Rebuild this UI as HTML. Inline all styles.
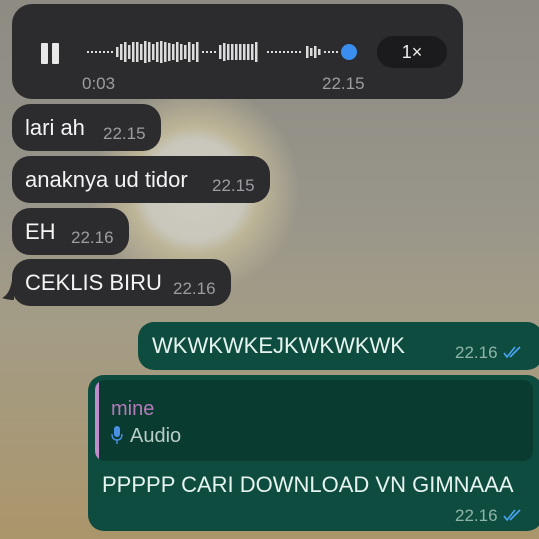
<!DOCTYPE html><html><head><style>
*{margin:0;padding:0;box-sizing:border-box}
body{width:539px;height:539px;overflow:hidden;position:relative;font-family:"Liberation Sans",sans-serif;
background:radial-gradient(circle at 195px 190px,#cfcdc3 0,#c9c7bc 50px,#bdb597 64px,rgba(160,150,120,0) 105px),linear-gradient(180deg,#8d8b82 0%,#97948a 35%,#a39c86 60%,#ab966b 100%)}
.b{position:absolute;background:#2c2b2e;border-radius:18px;color:#fff}
.t{position:absolute;font-size:22px;color:#f4f4f4}
.tm{position:absolute;font-size:17px;color:#9d9ca0}
.g{position:absolute;background:#0f4c40;border-radius:16px}
.gt{position:absolute;font-size:22px;color:#e6f4ef}
.gm{position:absolute;font-size:17px;color:#8fb4a8}
</style></head><body>
<div class="b" style="left:12px;top:4px;width:451px;height:95px;border-radius:20px">
<div style="position:absolute;left:29px;top:39px;width:7px;height:21px;background:#e8e8e8;border-radius:1px"></div>
<div style="position:absolute;left:40px;top:39px;width:7px;height:21px;background:#e8e8e8;border-radius:1px"></div>
<svg style="position:absolute;left:0;top:0" width="451" height="95">
<g fill="#dcdcdc">
<rect x="75" y="47" width="2" height="2"/><rect x="79" y="47" width="2" height="2"/><rect x="83" y="47" width="2" height="2"/><rect x="87" y="47" width="2" height="2"/><rect x="91" y="47" width="2" height="2"/><rect x="95" y="47" width="2" height="2"/><rect x="99" y="47" width="2" height="2"/>
<rect x="104" y="43" width="2.5" height="10"/><rect x="108" y="40" width="2.5" height="16"/><rect x="112" y="38" width="2.5" height="20"/><rect x="116" y="41" width="2.5" height="14"/><rect x="120" y="38" width="2.5" height="20"/><rect x="124" y="38" width="2.5" height="20"/><rect x="128" y="40" width="2.5" height="16"/><rect x="132" y="37" width="2.5" height="22"/><rect x="136" y="38" width="2.5" height="20"/><rect x="140" y="40" width="2.5" height="16"/><rect x="144" y="38" width="2.5" height="20"/><rect x="148" y="37" width="2.5" height="22"/><rect x="152" y="38" width="2.5" height="20"/><rect x="156" y="39" width="2.5" height="18"/><rect x="160" y="40" width="2.5" height="16"/><rect x="164" y="38" width="2.5" height="20"/><rect x="168" y="40" width="2.5" height="16"/><rect x="172" y="41" width="2.5" height="14"/><rect x="176" y="38" width="2.5" height="20"/><rect x="180" y="40" width="2.5" height="16"/><rect x="184" y="38" width="2.5" height="20"/>
<rect x="190" y="47" width="2" height="2"/><rect x="194" y="47" width="2" height="2"/><rect x="198" y="47" width="2" height="2"/><rect x="202" y="47" width="2" height="2"/>
<rect x="207" y="41" width="2.5" height="14"/><rect x="211" y="39" width="2.5" height="18"/><rect x="215" y="40" width="2.5" height="16"/><rect x="219" y="40" width="2.5" height="16"/><rect x="223" y="40" width="2.5" height="16"/><rect x="227" y="40" width="2.5" height="16"/><rect x="231" y="40" width="2.5" height="16"/><rect x="235" y="40" width="2.5" height="16"/><rect x="239" y="40" width="2.5" height="16"/><rect x="243" y="38" width="2.5" height="20"/>
<rect x="255" y="47" width="2" height="2"/><rect x="259" y="47" width="2" height="2"/><rect x="263" y="47" width="2" height="2"/><rect x="267" y="47" width="2" height="2"/><rect x="271" y="47" width="2" height="2"/><rect x="275" y="47" width="2" height="2"/><rect x="279" y="47" width="2" height="2"/><rect x="283" y="47" width="2" height="2"/><rect x="287" y="47" width="2" height="2"/>
<rect x="294" y="42" width="2.5" height="12"/><rect x="298" y="44" width="2.5" height="8"/><rect x="302" y="42" width="2.5" height="12"/><rect x="306" y="45" width="2.5" height="6"/>
<rect x="312" y="47" width="2" height="2"/><rect x="316" y="47" width="2" height="2"/><rect x="320" y="47" width="2" height="2"/><rect x="324" y="47" width="2" height="2"/>
</g>
<circle cx="337" cy="48" r="8" fill="#3a8ef0"/>
</svg>
<div style="position:absolute;left:365px;top:32px;width:70px;height:32px;background:#1b1b1d;border-radius:16px;color:#eee;font-size:18px;text-align:center;line-height:32px">1×</div>
<div class="tm" style="left:70px;top:70px">0:03</div>
<div class="tm" style="left:310px;top:70px">22.15</div>
</div>

<div class="b" style="left:12px;top:104px;width:149px;height:47px"><div class="t" style="left:13px;top:11px">lari ah</div><div class="tm" style="left:91px;top:20px">22.15</div></div>
<div class="b" style="left:12px;top:156px;width:258px;height:47px"><div class="t" style="left:13px;top:11px">anaknya ud tidor</div><div class="tm" style="left:200px;top:20px">22.15</div></div>
<div class="b" style="left:12px;top:208px;width:117px;height:47px"><div class="t" style="left:13px;top:11px">EH</div><div class="tm" style="left:59px;top:20px">22.16</div></div>
<svg style="position:absolute;left:0;top:280px" width="20" height="22"><path d="M14 0 L14 20 Q8 20 2 18 Q10 14 12 0Z" fill="#2c2b2e"/></svg>
<div class="b" style="left:12px;top:259px;width:219px;height:47px"><div class="t" style="left:13px;top:11px">CEKLIS BIRU</div><div class="tm" style="left:161px;top:20px">22.16</div></div>

<div class="g" style="left:138px;top:322px;width:405px;height:48px">
<div class="gt" style="left:14px;top:11px">WKWKWKEJKWKWKWK</div>
<div class="gm" style="left:317px;top:21px">22.16</div>
<svg style="position:absolute;left:365px;top:23px" width="22" height="14"><path d="M1 8 L4 12 L12 2 M7 12 L17 2" stroke="#4aa6f2" stroke-width="1.6" fill="none"/></svg>
</div>

<div class="g" style="left:88px;top:375px;width:455px;height:156px">
<div style="position:absolute;left:7px;top:5px;width:438px;height:81px;background:#0a3b31;border-radius:10px;overflow:hidden">
<div style="position:absolute;left:0;top:0;width:4px;height:81px;background:#c28ccf"></div>
<div style="position:absolute;left:16px;top:18px;font-size:20px;color:#b57ab8">mine</div>
<svg style="position:absolute;left:16px;top:46px" width="12" height="18"><rect x="3" y="0" width="6" height="11" rx="3" fill="#4a90e2"/><path d="M1 8 Q1 14 6 14 Q11 14 11 8 M6 14 V18" stroke="#4a90e2" stroke-width="1.4" fill="none"/></svg>
<div style="position:absolute;left:35px;top:45px;font-size:20px;color:#b9cdc6">Audio</div>
</div>
<div class="gt" style="left:14px;top:97px">PPPPP CARI DOWNLOAD VN GIMNAAA</div>
<div class="gm" style="left:367px;top:131px">22.16</div>
<svg style="position:absolute;left:415px;top:133px" width="22" height="14"><path d="M1 8 L4 12 L12 2 M7 12 L17 2" stroke="#4aa6f2" stroke-width="1.6" fill="none"/></svg>
</div>
</body></html>
